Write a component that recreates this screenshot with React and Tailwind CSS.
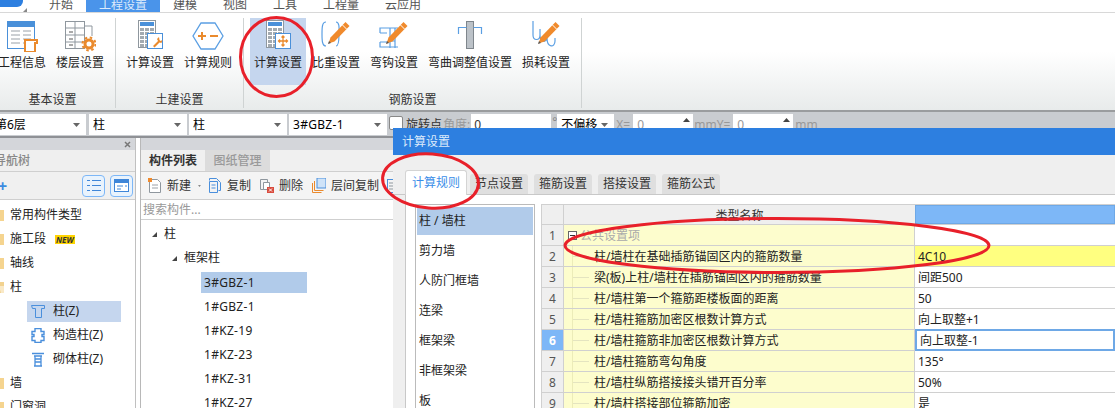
import React from 'react';

const Pencil = () => (
  <g>
    <path d="M25.500 2l4 4-15 15.500-6 2 2-6z" fill="#f08a2c" />
    <path d="M22.500 5l4 4" stroke="#fff" strokeWidth="1" />
    <path d="M8 24l1-3 2 2z" fill="#555" />
  </g>
);

const CalcBody = () => (
  <g>
    <rect x="4.500" y="0.500" width="17" height="27" fill="#fff" stroke="#8f979e" />
    <rect x="6" y="2" width="14" height="4" fill="#4a90d9" />
    {[8, 12, 16, 20, 24].map((y) =>
      [6, 11, 16].map((x) => <rect key={`${x}-${y}`} x={x} y={y} width="4" height="3" fill="#a3aab0" />)
    )}
    <rect x="13.500" y="13.500" width="15" height="15" fill="#fff" stroke="#4a90d9" />
  </g>
);

const icons = {
  info: (
    <svg width="32" height="32" viewBox="0 0 32 32" fill="none">
      <rect x="1.500" y="1.500" width="27" height="27" fill="#fff" stroke="#4a90d9" />
      <rect x="1" y="1" width="28" height="6" fill="#4a90d9" />
      {[11, 15, 19, 23].map((y) => (
        <path key={y} d={`M5 ${y}h9M17 ${y}h8`} stroke="#9aa1a8" />
      ))}
      <path d="M19 20h12v3h-2v9H19z" fill="#fff" stroke="#ea8a2d" strokeWidth="2" />
    </svg>
  ),
  floor: (
    <svg width="32" height="32" viewBox="0 0 32 32" fill="none">
      <rect x="1.500" y="1.500" width="19" height="27" fill="#fff" stroke="#8f979e" />
      <path d="M1.500 8h19M1.500 15h19M1.500 22h19M11 1.500v27M20 6h8v10" stroke="#8f979e" />
      <path d="M5 12h4M5 19h4M5 25h4" stroke="#555" />
      <circle cx="25" cy="24" r="4" stroke="#ea8a2d" strokeWidth="3" />
      <circle cx="25" cy="24" r="6.500" stroke="#ea8a2d" strokeWidth="2" strokeDasharray="2.500 2.600" />
    </svg>
  ),
  calcWrench: (
    <svg width="32" height="32" viewBox="0 0 32 32" fill="none">
      <CalcBody />
      <path d="M25 17l-2 2 1 2-5 5 1.500 1.500 5-5 2 .5 1-3-2 1-1-1z" fill="#ea8a2d" />
    </svg>
  ),
  calcCross: (
    <svg width="32" height="32" viewBox="0 0 32 32" fill="none">
      <CalcBody />
      <path d="M21 16v10M16.500 21h9M19.500 17.500l1.500-1.500 1.500 1.500M19.500 24.500l1.500 1.500 1.500-1.500M18 19.500L16.500 21l1.500 1.500M24 19.500l1.500 1.500-1.500 1.500" stroke="#ea8a2d" strokeWidth="1.300" />
    </svg>
  ),
  rule: (
    <svg width="32" height="32" viewBox="0 0 32 32" fill="none">
      <path d="M9 3h14l8 13-8 13H9L1 16z" fill="#fff" stroke="#5b9fe3" strokeWidth="1.300" />
      <path d="M6 16h8M10 12v8M18 16h8" stroke="#ea8a2d" strokeWidth="2" />
    </svg>
  ),
  weight: (
    <svg width="32" height="32" viewBox="0 0 32 32" fill="none">
      <path d="M6 2C2 2 2 8 2 14s0 12 4 12M16 2c4 0 3 8 3 12s0 12-3 12" stroke="#5b9fe3" strokeWidth="1.200" />
      <Pencil />
    </svg>
  ),
  hook: (
    <svg width="32" height="32" viewBox="0 0 32 32" fill="none">
      <path d="M2 13V8h18M2 13h7M12 8v20M17 8v20M12 17h5M12 21h5M2 22h7M2 22v5h18" stroke="#5b9fe3" strokeWidth="1.200" />
      <Pencil />
    </svg>
  ),
  bend: (
    <svg width="32" height="32" viewBox="0 0 32 32" fill="none">
      <rect x="12.500" y="1.500" width="7" height="27" fill="#bcc2c8" stroke="#7f868c" />
      <path d="M4.500 14V7.500h8M27.500 14V7.500h-8" stroke="#5b9fe3" strokeWidth="1.200" />
    </svg>
  ),
  loss: (
    <svg width="32" height="32" viewBox="0 0 32 32" fill="none">
      <path d="M3 1v14c0 6 7 6 7 0V9M10 15c0 8 7 8 7 2v-5M17 18c0 10 8 10 8 3v-3" stroke="#5b9fe3" strokeWidth="1.200" />
      <Pencil />
    </svg>
  ),
};

const Caret = ({ className }) => (
  <svg width="7" height="4" viewBox="0 0 7 4" className={className}><path d="M0 0h7L3.500 4z" fill="#666" /></svg>
);

const RibbonBtn = ({ icon, label, active }) => (
  <div className={`flex flex-col items-center h-[67px] px-1 ${active ? 'bg-[#c5d6ee]' : ''}`}>
    <div className="h-[32px] mt-[2px] flex items-center justify-center">{icons[icon]}</div>
    <div className="mt-[3px] whitespace-nowrap leading-[16px] text-[#222]">{label}</div>
  </div>
);

const RibbonGroup = ({ label, width, children, rowClass = '', labelClass = '' }) => (
  <div className="relative flex flex-col items-center shrink-0 border-r border-[#cfd3d3] h-[90px]" style={{ width }}>
    <div className={`flex gap-0.5 w-full px-[6px] h-[74px] ${rowClass}`}>{children}</div>
    <div className={`leading-[16px] text-[#333] ${labelClass}`}>{label}</div>
  </div>
);

const Select = ({ w, children, textClass = '' }) => (
  <div className="flex items-center justify-between bg-white h-[21px] px-1 shrink-0 overflow-hidden" style={{ width: w }}>
    <span className={`whitespace-nowrap ${textClass}`}>{children}</span>
    <Caret className="shrink-0 mr-[2px]" />
  </div>
);

const Num = ({ w, children }) => (
  <div className="relative bg-white h-[22px] px-1 leading-[22px] shrink-0 text-[#999]" style={{ width: w }}>
    {children}
    <svg width="7" height="4" viewBox="0 0 7 4" className="absolute right-[3px] top-[4px]"><path d="M0 4h7L3.500 0z" fill="#444" /></svg>
  </div>
);

const Folder = ({ open }) => (
  <svg width="10" height="12" viewBox="0 0 10 12" className="-ml-[6px] shrink-0">
    <path d="M0 1h10v11H0z" fill={open ? '#f2d28f' : '#f5d48f'} />
    {open && <path d="M5 5h5v7H7z" fill="#fff" opacity="0.5" />}
  </svg>
);

const leftTree = [
  { t: '常用构件类型' },
  { t: '施工段', isNew: true },
  { t: '轴线' },
  { t: '柱', open: true },
];

const SubIcon = ({ kind }) => (
  <svg width="14" height="15" viewBox="0 0 14 15" fill="none" stroke="#4a8fdc" className="shrink-0">
    {kind === 0 && <path d="M.5 1.500h13v3h-3v9h-6v-9h-3z" />}
    {kind === 1 && <path d="M4 .5h6v3h3v3h-2v2h2v4h-3v2H4v-2H1v-4h2v-2H1v-3h3z" strokeWidth="1.400" />}
    {kind === 2 && <path d="M1 1.500h12M3 4h8M4 4v10h6V4M4 7h6M4 10h6M3 14h8" strokeWidth="1.300" />}
  </svg>
);

const SubRow = ({ kind, label, active }) => (
  <div className="h-[24px] flex items-center">
    <div className={`ml-[27px] w-[94px] h-[21px] flex items-center gap-2 pl-1 ${active ? 'bg-[#c5d6ee]' : ''}`}>
      <SubIcon kind={kind} />
      <span className="whitespace-nowrap text-[#222]">{label}</span>
    </div>
  </div>
);

const Arrow = () => <svg width="5" height="5" viewBox="0 0 5 5" className="shrink-0"><path d="M5 0v5H0z" fill="#444" /></svg>;

const midItems = ['3#GBZ-1', '1#GBZ-1', '1#KZ-19', '1#KZ-23', '1#KZ-31', '1#KZ-27'];

const MidTool = ({ icon, label, className = '' }) => (
  <div className={`flex items-center gap-[5px] shrink-0 whitespace-nowrap text-[#333] ${className}`}>
    {icon}
    <span>{label}</span>
  </div>
);

const rows = [
  ['柱/墙柱在基础插筋锚固区内的箍筋数量', '4C10'],
  ['梁(板)上柱/墙柱在插筋锚固区内的箍筋数量', '间距500'],
  ['柱/墙柱第一个箍筋距楼板面的距离', '50'],
  ['柱/墙柱箍筋加密区根数计算方式', '向上取整+1'],
  ['柱/墙柱箍筋非加密区根数计算方式', '向上取整-1'],
  ['柱/墙柱箍筋弯勾角度', '135°'],
  ['柱/墙柱纵筋搭接接头错开百分率', '50%'],
  ['柱/墙柱搭接部位箍筋加密', '是'],
];

const sideItems = ['剪力墙', '人防门框墙', '连梁', '框架梁', '非框架梁', '板'];

export default function App() {
  return (
    <div className="relative w-[1115px] h-[408px] overflow-hidden bg-white flex flex-col text-[12px] font-['Noto_Sans','Noto_Sans_CJK_SC',sans-serif]">
      {/* top tabs */}
      <div className="h-[13px] shrink-0 overflow-hidden border-b border-[#d8d8d8] flex relative">
        <div className="absolute left-0 top-0 w-[23px] h-[7px] bg-[#2d7fe0] rounded-br-[6px]" />
        <svg width="4" height="4" viewBox="0 0 4 4" className="absolute left-[23px] top-[8px]"><path d="M4 0v4H0z" fill="#888" /></svg>
        <div className="flex ml-[36px] -mt-[3px] h-[16px] leading-[16px] text-[#555]">
          <div className="px-[13px]">开始</div>
          <div className="px-[13px] bg-[#4a94ea] text-[#dceafb]">工程设置</div>
          <div className="px-[13px]">建模</div>
          <div className="px-[13px]">视图</div>
          <div className="px-[13px]">工具</div>
          <div className="px-[13px]">工程量</div>
          <div className="px-[13px]">云应用</div>
        </div>
      </div>

      {/* ribbon */}
      <div className="h-[97px] shrink-0 flex pt-[5px] bg-linear-to-b from-white from-40% to-[#e8ebeb]">
        <RibbonGroup label="基本设置" width={116} rowClass="self-start -ml-[12px]" labelClass="-ml-[10px]">
          <RibbonBtn icon="info" label="工程信息" />
          <RibbonBtn icon="floor" label="楼层设置" />
        </RibbonGroup>
        <RibbonGroup label="土建设置" width={128}>
          <RibbonBtn icon="calcWrench" label="计算设置" />
          <RibbonBtn icon="rule" label="计算规则" />
        </RibbonGroup>
        <RibbonGroup label="钢筋设置" width={338}>
          <RibbonBtn icon="calcCross" label="计算设置" active />
          <RibbonBtn icon="weight" label="比重设置" />
          <RibbonBtn icon="hook" label="弯钩设置" />
          <RibbonBtn icon="bend" label="弯曲调整值设置" />
          <RibbonBtn icon="loss" label="损耗设置" />
        </RibbonGroup>
      </div>

      {/* property bar */}
      <div className="h-[26px] shrink-0 bg-[#c9ccd0] border-t-2 border-[#9a9c9e] pt-[2px] flex items-start">
        <Select w={86} textClass="-ml-[9px]">第6层</Select>
        <div className="ml-[3px] flex gap-[2px]">
          <Select w={98}>柱</Select>
          <Select w={98}>柱</Select>
          <Select w={98} textClass="tracking-[0.3px]">3#GBZ-1</Select>
        </div>
        <div className="ml-[2px] mt-[2px] w-[14px] h-[14px] bg-white border border-[#888] rounded-[2px] shrink-0" />
        <span className="ml-[3px] leading-[22px] whitespace-nowrap text-[#333]">旋转点</span>
        <span className="ml-[1px] leading-[22px] whitespace-nowrap text-[#999]">角度:</span>
        <div className="ml-[1px] w-[80px] h-[22px] bg-white px-[3px] leading-[22px] text-[#333] shrink-0">0</div>
        <span className="w-[5px] ml-[1px] text-[#888] leading-[16px]">°</span>
        <Select w={57}>不偏移</Select>
        <span className="ml-[2px] w-[17px] leading-[22px] text-[#999]">X=</span>
        <Num w={60}>0</Num>
        <span className="w-[40px] pl-px leading-[22px] text-[#999] whitespace-nowrap">mmY=</span>
        <Num w={60}>0</Num>
        <span className="ml-[2px] leading-[22px] text-[#999]">mm</span>
      </div>

      {/* work area */}
      <div className="flex-1 flex border-t-2 border-[#8f9195] min-h-0">
        {/* left tree panel */}
        <div className="w-[135px] shrink-0 flex flex-col overflow-hidden">
          <div className="h-[12px] shrink-0 bg-[#d4d6da] flex items-center justify-end pr-[4px]">
            <svg width="7" height="7" viewBox="0 0 7 7"><path d="M1 1l5 5M6 1l-5 5" stroke="#777" strokeWidth="1.500" /></svg>
          </div>
          <div className="h-[22px] shrink-0 bg-[#efefef] border-b border-[#cfcfcf] text-[#888] leading-[21px] -ml-[6px] font-medium">导航树</div>
          <div className="h-[28px] shrink-0 bg-[#f0f0f0] border-b border-[#cfcfcf] flex items-center">
            <span className="text-[#3d8be0] text-[16px] font-bold ml-[-2px] leading-none">+</span>
            <div className="ml-auto flex gap-[5px] pr-[2px]">
              <div className="w-[23px] h-[22px] rounded-[4px] border border-[#7db7f7] bg-[#e9f3fd] flex items-center justify-center">
                <svg width="14" height="13" viewBox="0 0 14 13" fill="none" stroke="#3f86d8"><path d="M0 1.500h3M5 1.500h9M0 6.500h3M5 6.500h9M0 11.500h3M5 11.500h9" /></svg>
              </div>
              <div className="w-[23px] h-[22px] rounded-[4px] border border-[#7db7f7] bg-[#e9f3fd] flex items-center justify-center">
                <svg width="15" height="13" viewBox="0 0 15 13" fill="none"><rect x=".5" y=".5" width="14" height="12" fill="#fff" stroke="#3f86d8" /><rect x="1" y="1" width="13" height="3" fill="#3f86d8" /><path d="M3 7h6M3 10h4M11 7h2" stroke="#3f86d8" /></svg>
              </div>
            </div>
          </div>
          <div className="flex-1 pt-[3px]">
            {leftTree.map((r) => (
              <div key={r.t} className="h-[24px] flex items-center gap-[6px] text-[#222]">
                <Folder open={r.open} />
                <span className="whitespace-nowrap">{r.t}</span>
                {r.isNew && <span className="ml-[3px] bg-[#ffd400] text-[#333] text-[8px] font-bold italic leading-[9px] px-px">NEW</span>}
              </div>
            ))}
            <SubRow kind={0} label="柱(Z)" active />
            <SubRow kind={1} label="构造柱(Z)" />
            <SubRow kind={2} label="砌体柱(Z)" />
            <div className="h-[24px] flex items-center gap-[6px] text-[#222]"><Folder /><span>墙</span></div>
            <div className="h-[24px] flex items-center gap-[6px] text-[#222]"><Folder /><span>门窗洞</span></div>
          </div>
        </div>

        <div className="w-[1px] bg-[#c0c0c0] shrink-0" />
        <div className="w-[4px] shrink-0" />

        {/* component list */}
        <div className="w-[253px] shrink-0 border-l border-[#b8b8b8] flex flex-col overflow-hidden">
          <div className="h-[12px] shrink-0 bg-[#d4d6da]" />
          <div className="h-[22px] shrink-0 bg-[#f0f0f0] border-b border-[#cfcfcf] flex">
            <div className="w-[64px] text-center leading-[21px] font-bold text-[#333]">构件列表</div>
            <div className="w-[65px] text-center leading-[21px] font-medium text-[#999] bg-[#dcdcdc]">图纸管理</div>
          </div>
          <div className="h-[28px] shrink-0 bg-[#f4f4f4] border-b border-[#cfcfcf] flex items-center pl-[7px]">
            <MidTool
              label="新建"
              icon={<svg width="14" height="15" viewBox="0 0 14 15" fill="none"><path d="M1.500 1.500h8l3 3v10h-11z" fill="#fff" stroke="#8f979e" /><path d="M4 7h6M4 10h6" stroke="#9aa1a8" /><rect x="0" y="0" width="4" height="4" fill="#f08a2c" /></svg>}
            />
            <Caret className="ml-[7px]" />
            <MidTool
              className="ml-[8px]"
              label="复制"
              icon={<svg width="13" height="15" viewBox="0 0 13 15" fill="none" stroke="#4a8fdc"><path d="M.5 2.500V.5h7l4 4v8h-2" /><path d="M.5 3.500h8v11h-8zM2.500 7h4M2.500 10h4" /></svg>}
            />
            <MidTool
              className="ml-[9px]"
              label="删除"
              icon={<svg width="14" height="14" viewBox="0 0 14 14" fill="none"><path d="M.5.5h7v10h-7z" stroke="#8f979e" /><path d="M3.500 3.500h6v7h-6z" fill="#fff" stroke="#8f979e" /><rect x="7" y="8" width="7" height="6" fill="#d94b3d" /><path d="M9 9.500l3 3M12 9.500l-3 3" stroke="#fff" /></svg>}
            />
            <MidTool
              className="ml-[9px]"
              label="层间复制"
              icon={<svg width="14" height="15" viewBox="0 0 14 15" fill="none"><path d="M.5 5v9.500h9" stroke="#ea8a2d" /><path d="M2.500 3v9.500h9" stroke="#ea8a2d" /><rect x="5" y="0" width="9" height="10" fill="#cfe3f8" stroke="#4a8fdc" /></svg>}
            />
            <svg width="6" height="14" viewBox="0 0 6 14" fill="none" stroke="#4a8fdc" className="ml-[8px] shrink-0"><rect x=".5" y=".5" width="9" height="13" /><path d="M2 4h5M2 7h5M2 10h5" stroke="#8f979e" /></svg>
          </div>
          <div className="h-[20px] shrink-0 border-b border-[#cfcfcf] pl-[2px] leading-[19px] text-[#999]">搜索构件...</div>
          <div className="flex-1 pt-[2px]">
            <div className="h-[24px] flex items-center pl-[11px] gap-[7px] text-[#222]"><Arrow /><span>柱</span></div>
            <div className="h-[24px] flex items-center pl-[31px] gap-[7px] text-[#222]"><Arrow /><span>框架柱</span></div>
            {midItems.map((m, i) => (
              <div key={m} className="h-[24px] flex items-center pl-[60px]">
                <div className={`w-[106px] h-[21px] pl-[3px] leading-[21px] tracking-[0.3px] text-[#222] ${i === 0 ? 'bg-[#b1cbea]' : ''}`}>{m}</div>
              </div>
            ))}
          </div>
        </div>
      </div>

      {/* calc settings dialog */}
      <div className="absolute left-[393px] top-[128px] right-0 bottom-0 flex flex-col bg-[#efefef]">
        <div className="h-[27px] shrink-0 bg-[#2d7fe0] pl-[9px] leading-[27px] text-[#dceafb]">计算设置</div>
        <div className="h-[40px] shrink-0 flex items-end pl-[12px] border-b border-[#c8c8c8]">
          <div className="w-[62px] h-[25px] -mb-px bg-white border border-[#d4d4d4] border-b-0 rounded-t-[3px] text-center leading-[24px] text-[#3b8ee8]">计算规则</div>
          <div className="ml-[3px] flex gap-[6px]">
            {['节点设置', '箍筋设置', '搭接设置', '箍筋公式'].map((t) => (
              <div key={t} className="w-[58px] h-[20px] bg-[#dfdfdf] rounded-t-[3px] text-center leading-[20px] text-[#333]">{t}</div>
            ))}
          </div>
        </div>
        <div className="flex-1 ml-[12px] bg-white border-l border-[#c8c8c8] pl-[9px] pt-[9px] flex min-h-0 overflow-hidden">
          <div className="w-[120px] shrink-0 border border-[#bbb] border-b-0 p-px">
            <div className="h-[28px] mt-px bg-[#b1cbea] pl-[2px] leading-[28px] text-[#222]">柱 / 墙柱</div>
            <div className="pt-px">
              {sideItems.map((s) => (
                <div key={s} className="h-[30px] pl-[2px] leading-[30px] text-[#222]">{s}</div>
              ))}
            </div>
          </div>
          <div className="ml-[6px] flex-1 border-t border-l border-[#d0d0d0] min-w-0">
            <div className="flex h-[20px] border-b border-[#d0d0d0]">
              <div className="w-[22px] shrink-0 bg-[#efefef] border-r border-[#d0d0d0]" />
              <div className="w-[351px] shrink-0 bg-[#efefef] text-center leading-[21px] text-[#333]">类型名称</div>
              <div className="flex-1 bg-[#7db7f7] border border-[#6ea8e6]" />
            </div>
            <div className="flex h-[21px] border-b border-[#d0d0d0]">
              <div className="w-[22px] shrink-0 bg-[#efefef] border-r border-[#d0d0d0] text-center leading-[21px] text-[#555]">1</div>
              <div className="w-[351px] shrink-0 bg-[#fdfdcd] border-r border-[#d0d0d0] flex items-center pl-[4px] gap-[2px]">
                <div className="w-[9px] h-[9px] bg-white border border-[#666] flex items-center justify-center shrink-0"><div className="w-[5px] h-px bg-[#333]" /></div>
                <span className="text-[#aaa] ml-[1px] pt-px">公共设置项</span>
              </div>
              <div className="flex-1" />
            </div>
            {rows.map(([name, val], i) => {
              const n = i + 2;
              const sel = n === 6;
              return (
                <div key={n} className="flex h-[21px] border-b border-[#d0d0d0]">
                  <div className={`w-[22px] shrink-0 border-r border-[#d0d0d0] text-center leading-[21px] ${sel ? 'bg-[#7db7f7] text-white font-bold' : 'bg-[#efefef] text-[#555]'}`}>{n}</div>
                  <div className="w-[351px] shrink-0 bg-[#fdfdcd] border-r border-[#d0d0d0] flex items-center">
                    <div className="ml-[8px] h-full border-l border-[#ececb8] flex items-center shrink-0">
                      <div className="w-[16px] h-px bg-[#e4e4c0]" />
                    </div>
                    <span className="ml-[5px] pt-px whitespace-nowrap text-[#222]">{name}</span>
                  </div>
                  <div className={`flex-1 pl-[3px] text-[#222] ${n === 2 ? 'bg-[#ffff80]' : ''} ${sel ? 'border-2 border-[#6ea8e6] -my-px leading-[19px] pl-[2px]' : 'leading-[21px]'}`}>{val}</div>
                </div>
              );
            })}
          </div>
        </div>
      </div>

      {/* red markup on top of the screenshot */}
      <svg className="absolute inset-0 pointer-events-none" width="1115" height="408" viewBox="0 0 1115 408" fill="none" stroke="#e8202a" strokeWidth="3">
        <ellipse cx="276.500" cy="57" rx="36" ry="39.500" />
        <ellipse cx="430.500" cy="181" rx="48" ry="27" transform="rotate(4 430.500 181)" />
        <ellipse cx="777" cy="245.500" rx="212" ry="27" />
      </svg>
    </div>
  );
}
